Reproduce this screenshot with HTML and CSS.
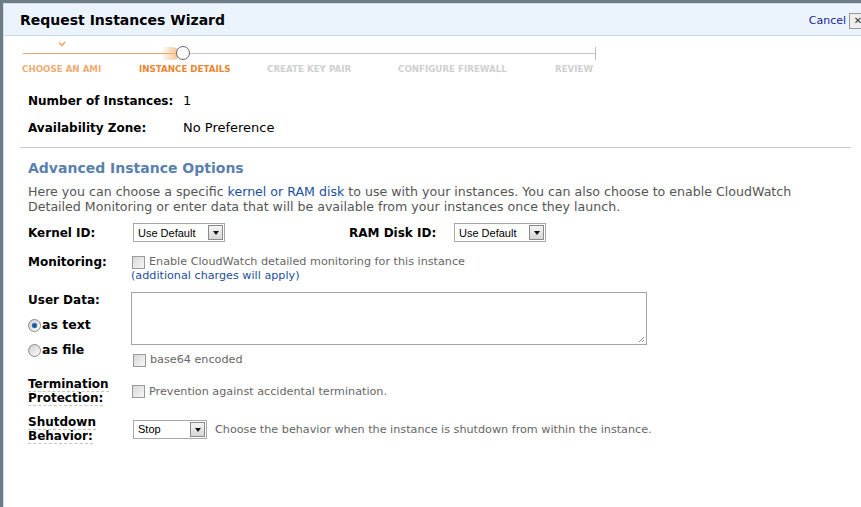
FILE: index.html
```html
<!DOCTYPE html>
<html>
<head>
<meta charset="utf-8">
<link rel="stylesheet" href="styles.css">
</head>
<body>
<div class="dialog">
  <div class="header">
    <h1 class="title">Request Instances Wizard</h1>
    <div class="close"><span class="cancel">Cancel</span><span class="xbtn">✕</span></div>
  </div>
  <div class="progress">
    <div class="track">
      <div class="done"></div>
      <div class="glow"></div>
      <div class="dot"></div>
      <div class="tick"></div>
      <svg class="check" width="8" height="6" viewBox="0 0 8 6"><path d="M1 1.5 L4 4.5 L7 1" fill="none" stroke="#f0a868" stroke-width="1.6"/></svg>
    </div>
    <div class="steps">
      <span class="step s1 past">CHOOSE AN AMI</span>
      <span class="step s2 current">INSTANCE DETAILS</span>
      <span class="step s3">CREATE KEY PAIR</span>
      <span class="step s4">CONFIGURE FIREWALL</span>
      <span class="step s5">REVIEW</span>
    </div>
  </div>
  <div class="content">
    <div class="info">
      <div class="inforow"><span class="ilabel">Number of Instances:</span><span class="ival">1</span></div>
      <div class="inforow"><span class="ilabel">Availability Zone:</span><span class="ival">No Preference</span></div>
    </div>
    <div class="rule"></div>
    <h2 class="section">Advanced Instance Options</h2>
    <p class="intro"><span>Here you can choose a specific </span><a class="link">kernel or RAM disk</a><span> to use with your instances. You can also choose to enable CloudWatch</span> <span>Detailed Monitoring or enter data that will be available from your instances once they launch.</span></p>

    <div class="row r-kernel">
      <div class="label">Kernel ID:</div>
      <div class="field kernel-field">
        <span class="select w91"><span class="seltext">Use Default</span><span class="selbtn"><span class="arrow"></span></span></span>
        <span class="label ramlabel">RAM Disk ID:</span>
        <span class="select w91"><span class="seltext">Use Default</span><span class="selbtn"><span class="arrow"></span></span></span>
      </div>
    </div>

    <div class="row r-mon">
      <div class="label">Monitoring:</div>
      <div class="field">
        <div class="chkline"><span class="chk"></span><span class="small">Enable CloudWatch detailed monitoring for this instance</span></div>
        <div class="small link">(additional charges will apply)</div>
      </div>
    </div>

    <div class="row r-user">
      <div class="label usercol">
        <div>User Data:</div>
        <div class="radio-line"><span class="radio on"></span>as text</div>
        <div class="radio-line"><span class="radio"></span>as file</div>
      </div>
      <div class="field">
        <div class="textarea"><svg class="grip" width="7" height="7" viewBox="0 0 7 7"><path d="M6 1 L1 6 M6 4 L4 6" stroke="#888" stroke-width="1"/></svg></div>
        <div class="chkline b64"><span class="chk"></span><span class="small">base64 encoded</span></div>
      </div>
    </div>

    <div class="row r-term">
      <div class="label"><span class="dotted">Termination Protection:</span></div>
      <div class="field">
        <div class="chkline"><span class="chk"></span><span class="small">Prevention against accidental termination.</span></div>
      </div>
    </div>

    <div class="row r-shut">
      <div class="label"><span class="dotted">Shutdown Behavior:</span></div>
      <div class="field shut-field">
        <span class="select w73"><span class="seltext">Stop</span><span class="selbtn"><span class="arrow"></span></span></span>
        <span class="small">Choose the behavior when the instance is shutdown from within the instance.</span>
      </div>
    </div>
  </div>
</div>
</body>
</html>
```

FILE: styles.css
```css
html, body {
  margin: 0;
  padding: 0;
  height: 100%;
  overflow: hidden;
}
body {
  background: #6e7c88;
  font-family: "DejaVu Sans", Verdana, sans-serif;
  color: #000;
}
.dialog {
  margin: 3px 0 0 3px;
  width: 880px;
  height: 520px;
  background: #fff;
  border-left: 1px solid #d4dbe2;
  border-top: 1px solid #d4dbe2;
}
.header {
  height: 31px;
  background: #ebf3fd;
  border-bottom: 1px solid #c6daef;
  display: flex;
  align-items: center;
  justify-content: space-between;
}
.title {
  margin: 0 0 0 16px;
  font-size: 14px;
  font-weight: bold;
  color: #000;
  padding-top: 1px;
}
.close {
  display: flex;
  align-items: center;
  margin-right: 17px;
  padding-top: 2px;
}
.cancel {
  font-size: 11px;
  color: #1b2590;
  margin-right: 3px;
}
.xbtn {
  display: inline-block;
  width: 16px;
  height: 14px;
  border: 1px solid #999;
  background: #eee;
  font-size: 10px;
  line-height: 14px;
  text-align: center;
  color: #333;
}
.progress {
  height: 32px;
}
.track {
  position: relative;
  margin-left: 19px;
  margin-top: 17px;
  width: 572px;
  height: 1px;
  background: #c6c6c6;
}
.done {
  width: 150px;
  height: 1px;
  background: #eda46a;
}
.glow {
  position: absolute;
  left: 138px;
  top: -6px;
  width: 20px;
  height: 13px;
  background: linear-gradient(to right, rgba(245,190,140,0), rgba(245,175,110,0.9));
  border-radius: 2px 50% 50% 2px;
}
.dot {
  position: absolute;
  left: 153px;
  top: -7px;
  width: 12px;
  height: 12px;
  border: 1px solid #666;
  border-radius: 50%;
  background: #fff;
}
.tick {
  position: absolute;
  right: -1px;
  top: -6px;
  width: 1px;
  height: 13px;
  background: #bbb;
}
.check {
  position: absolute;
  left: 35px;
  top: -12px;
}
.steps {
  display: flex;
  margin-top: 10px;
  margin-left: 18px;
  font-size: 8.7px;
  font-weight: bold;
  color: #cfcfcf;
}
.step { display: block; }
.s1 { width: 117px; }
.s2 { width: 128px; }
.s3 { width: 131px; }
.s4 { width: 157px; }
.past { color: #f0ac72; }
.current { color: #e8872f; }
.content {
  padding: 0 0 0 24px;
}
.info {
  padding-top: 2px;
}
.inforow {
  display: flex;
  align-items: center;
  height: 27px;
}
.ilabel {
  width: 155px;
  font-size: 12px;
  font-weight: bold;
}
.ival {
  font-size: 13px;
}
.rule {
  margin: 6px 0 0 -8px;
  width: 831px;
  height: 1px;
  background: #c8c8c8;
}
.section {
  margin: 12px 0 0 0;
  font-size: 14px;
  font-weight: bold;
  color: #5a80ad;
}
.intro {
  margin: 8px 0 0 0;
  width: 800px;
  font-size: 12.6px;
  line-height: 15px;
  color: #555;
}
.link { color: #1c4f9c; }
.row {
  display: flex;
  width: 800px;
}
.label {
  width: 103px;
  flex: none;
  font-size: 12px;
  font-weight: bold;
  line-height: 14px;
}
.field {
  flex: 1;
}
.small {
  font-size: 11.2px;
  color: #666;
}
.small.link { color: #1c4f9c; }
.r-kernel { margin-top: 9px; align-items: center; height: 19px; }
.kernel-field { display: flex; align-items: center; padding-left: 2px; }
.ramlabel { margin-left: 124px; flex: none; width: 105px; }
.select {
  display: inline-flex;
  box-sizing: border-box;
  height: 19px;
  border: 1px solid #a7a7a7;
  background: #fff;
  font-family: "Liberation Sans", Arial, sans-serif;
  font-size: 11px;
  align-items: center;
}
.w91 { width: 92px; }
.w73 { width: 74px; }
.seltext { flex: 1; padding-left: 4px; }
.selbtn {
  width: 15px;
  height: 15px;
  margin-right: 1px;
  box-sizing: border-box;
  border: 1px solid #8a8a8a;
  background: linear-gradient(#f4f4f4, #d6d6d6);
  display: flex;
  align-items: center;
  justify-content: center;
}
.arrow {
  width: 0; height: 0;
  border-left: 3px solid transparent;
  border-right: 3px solid transparent;
  border-top: 4px solid #111;
  margin-top: 1px;
}
.r-mon { margin-top: 13px; }
.chkline { display: flex; align-items: center; }
.chk {
  display: inline-block;
  width: 11px;
  height: 11px;
  border: 1px solid #9a9a9a;
  background: linear-gradient(135deg, #d8d8d8, #f6f6f6);
  margin-right: 4px;
  margin-left: 1px;
  flex: none;
}
.r-mon .small.link { line-height: 14px; }
.r-mon .chkline .small { line-height: 14px; }
.r-user { margin-top: 10px; }
.radio-line {
  display: flex;
  align-items: center;
  margin-top: 11px;
  font-size: 12.5px;
}
.radio {
  width: 11px;
  height: 11px;
  border: 1px solid #8a8a8a;
  border-radius: 50%;
  background: linear-gradient(135deg, #ccc, #fff);
  margin-right: 1px;
  position: relative;
  flex: none;
}
.radio.on::after {
  content: "";
  position: absolute;
  left: 3px; top: 3px;
  width: 5px; height: 5px;
  border-radius: 50%;
  background: #1f5e9c;
  box-shadow: 0 0 1px #6fb4ee;
}
.textarea {
  position: relative;
  box-sizing: border-box;
  width: 516px;
  height: 53px;
  border: 1px solid #a5a5a5;
  margin-top: -1px;
}
.grip { position: absolute; right: 1px; bottom: 1px; }
.b64 { margin-top: 8px; margin-left: 1px; }
.b64 .small { line-height: 14px; }
.r-term { margin-top: 10px; align-items: center; }
.dotted {
  border-bottom: 1px dashed #c4c4c4;
}
.r-shut { margin-top: 10px; align-items: center; }
.shut-field { display: flex; align-items: center; padding-left: 2px; }
.shut-field .small { margin-left: 8px; }
```
